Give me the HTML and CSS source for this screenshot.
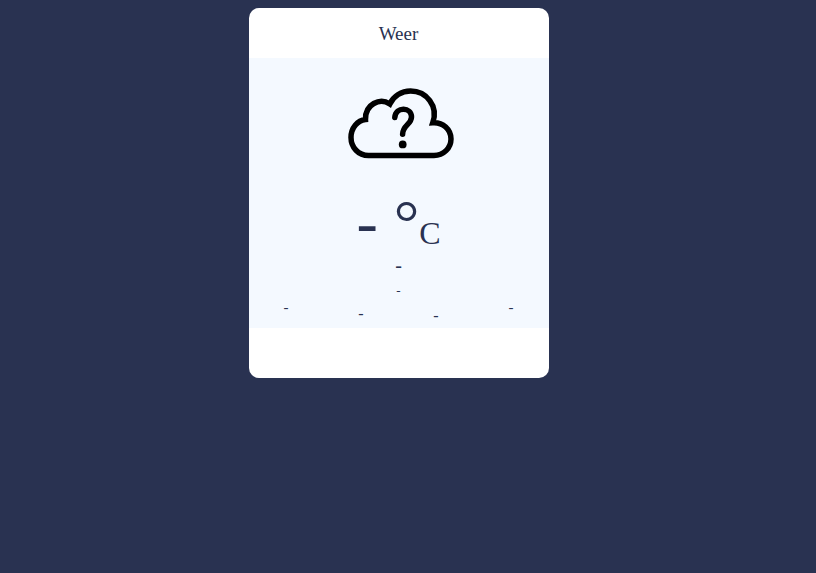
FILE: index.html
```html
<!DOCTYPE html>
<html lang="nl">
<head>
<meta charset="utf-8">
<title>Weer</title>
<link rel="stylesheet" href="styles.css">
</head>
<body>
<main class="card">
  <header class="title">Weer</header>
  <section class="weather">
    <svg class="icon" viewBox="0 0 120 90" fill="none" stroke="#000" stroke-width="5.5">
      <path d="M28.500 75.500H94C103.500 75.500 111 68 111 59C111 49.500 103 42 92.800 42.700C98.500 26 86.500 11 70.500 11C61.500 11 53.500 16 49.800 24C40 17.500 25 24 25.500 39.600C17.500 40.500 11 48 11 57.500C11 67.500 18.500 75.500 28.500 75.500Z"/>
      <path stroke-linecap="round" d="M54.800 37.500C55.800 26 71.500 27 71.500 37C71.500 44.500 62.600 45 62.600 54.300"/>
      <circle cx="62.700" cy="64.400" r="3.900" fill="#000" stroke="none"/>
    </svg>
    <div class="temperature">- °<span class="unit">C</span></div>
    <div class="description">-</div>
    <div class="location">-</div>
    <div class="details">
      <span class="small">-</span>
      <span class="middle">-</span>
      <span class="low">-</span>
      <span class="small">-</span>
    </div>
  </section>
</main>
</body>
</html>
```
FILE: styles.css
```css
body {
  margin: 8px 19px 0 0;
  background: #293251;
  color: #293251;
  font-family: "Liberation Serif", serif;
}
.card {
  width: 300px;
  height: 370px;
  margin: 0 auto;
  border-radius: 10px;
  background: #fff;
  overflow: hidden;
}
.title {
  height: 50px;
  line-height: 52px;
  font-size: 19px;
  text-align: center;
}
.weather {
  height: 270px;
  background: #f4f9ff;
  text-align: center;
}
.icon {
  display: block;
  width: 120px;
  height: 90px;
  margin: 0 auto;
  padding: 22px 0 21px 2px;
}
.temperature {
  height: 64px;
  line-height: 64px;
  font-size: 64px;
}
.unit {
  font-size: 32px;
}
.description {
  height: 28px;
  line-height: 21px;
  font-size: 20px;
}
.location {
  height: 16px;
  line-height: 16px;
  font-size: 13px;
}
.details {
  display: grid;
  grid-template-columns: repeat(4, 1fr);
}
.small {
  font-size: 15px;
  line-height: 16px;
}
.middle {
  font-size: 16px;
  line-height: 30px;
}
.low {
  font-size: 16px;
  line-height: 34px;
}
```
